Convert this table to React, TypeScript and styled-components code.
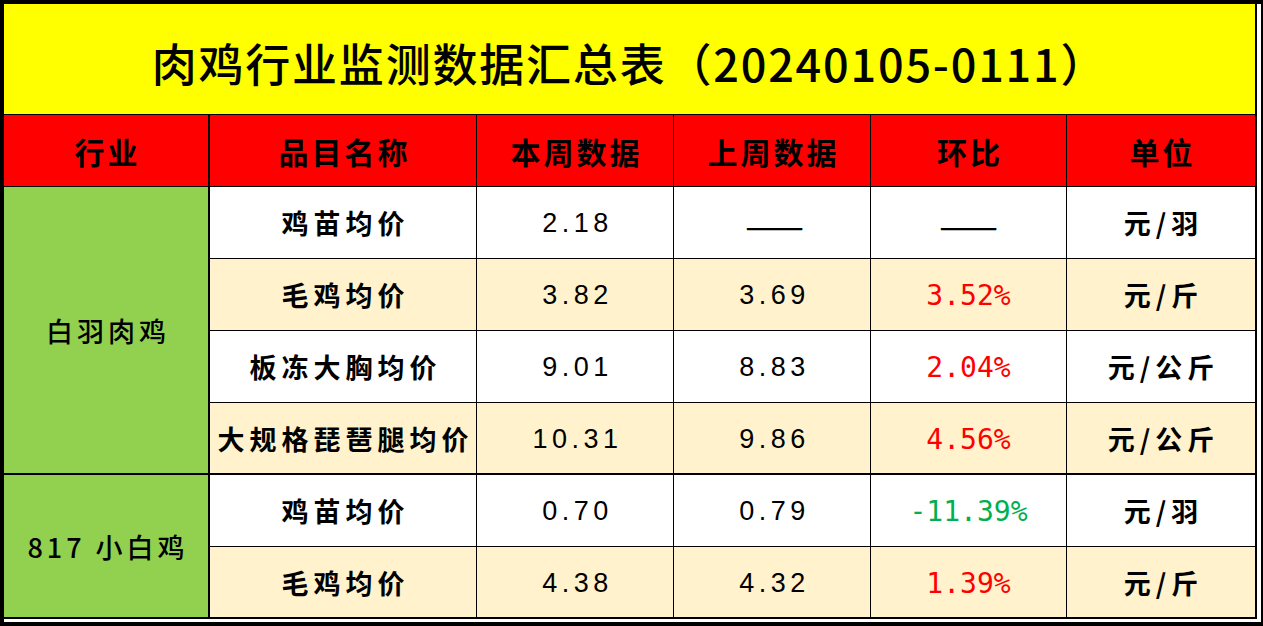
import React from "react";
import styled, { createGlobalStyle } from "styled-components";

const CJK = `"Noto Sans CJK SC", "Noto Sans", sans-serif`;

const COLOR = {
  TITLE: "#ffff00",
  HEAD: "#ff0000",
  GROUP: "#92d050",
  CREAM: "#fff2cc",
  WHITE: "#ffffff",
  UP: "#ff0000",
  DOWN: "#00b050",
};

const GlobalStyle = createGlobalStyle`
  body {
    margin: 0;
    background: #ffffff;
    font-family: ${CJK};
  }
`;

const Frame = styled.div`
  box-sizing: border-box;
  width: 1263px;
  height: 626px;
  border-top: 4px solid #000;
  border-left: 4px solid #000;
  border-bottom: 4px solid #000;
  border-right: 2px solid #000;
  background: #ffffff;
`;

const Sheet = styled.div`
  display: grid;
  grid-template-columns: 206px 267px 197px 197px 196px 190px;
  grid-template-rows: 111px repeat(7, 72px);
  width: 1253px;
`;

const Cell = styled.div<{ $bg?: string; $thickRight?: boolean; $thickBottom?: boolean }>`
  box-sizing: border-box;
  display: flex;
  align-items: center;
  justify-content: center;
  white-space: nowrap;
  background: ${p => p.$bg || COLOR.WHITE};
  border-right: ${p => (p.$thickRight ? 2 : 1)}px solid #000;
  border-bottom: ${p => (p.$thickBottom ? 2 : 1)}px solid #000;
  color: #000;
`;

const Title = styled(Cell)`
  grid-column: 1 / -1;
  padding-top: 6px;
  font-family: ${CJK};
  font-size: 45px;
  font-weight: 500;
  letter-spacing: 1.8px;
`;

const HeadCell = styled(Cell)`
  padding-left: 3px;
  font-family: ${CJK};
  font-size: 30px;
  font-weight: 700;
  letter-spacing: 3px;
`;

const GroupCell = styled(Cell)<{ $span: number }>`
  grid-row: span ${p => p.$span};
  padding-left: 4px;
  font-family: ${CJK};
  font-size: 27px;
  font-weight: 500;
  letter-spacing: 4px;
`;

const NameCell = styled(Cell)`
  padding-left: 5px;
  font-family: ${CJK};
  font-size: 27px;
  font-weight: 700;
  letter-spacing: 5px;
`;

const ValueCell = styled(Cell)`
  padding-left: 5px;
  padding-top: 2px;
  font-family: "Liberation Sans", Arial, sans-serif;
  font-size: 27px;
  letter-spacing: 4.5px;
`;

const Dash = styled.span`
  font-family: ${CJK};
  font-size: 35px;
  font-weight: 400;
  letter-spacing: 0;
`;

const RatioCell = styled(Cell)<{ $tone?: string }>`
  padding-top: 2px;
  font-family: "DejaVu Sans Mono", "Liberation Mono", monospace;
  font-size: 28px;
  color: ${p => p.$tone || "#000"};
`;

type Row = {
  item: string;
  cur: string;
  prev?: string;
  ratio?: string;
  unit: string;
};

const groups: { name: string; rows: Row[] }[] = [
  {
    name: "白羽肉鸡",
    rows: [
      { item: "鸡苗均价", cur: "2.18", unit: "元/羽" },
      { item: "毛鸡均价", cur: "3.82", prev: "3.69", ratio: "3.52%", unit: "元/斤" },
      { item: "板冻大胸均价", cur: "9.01", prev: "8.83", ratio: "2.04%", unit: "元/公斤" },
      { item: "大规格琵琶腿均价", cur: "10.31", prev: "9.86", ratio: "4.56%", unit: "元/公斤" },
    ],
  },
  {
    name: "817 小白鸡",
    rows: [
      { item: "鸡苗均价", cur: "0.70", prev: "0.79", ratio: "-11.39%", unit: "元/羽" },
      { item: "毛鸡均价", cur: "4.38", prev: "4.32", ratio: "1.39%", unit: "元/斤" },
    ],
  },
];

const heads = ["行业", "品目名称", "本周数据", "上周数据", "环比", "单位"];

export default function App() {
  let index = 0;
  return (
    <>
      <GlobalStyle />
      <Frame>
        <Sheet>
          <Title $bg={COLOR.TITLE} $thickRight>
            肉鸡行业监测数据汇总表（20240105-0111）
          </Title>
          {heads.map((h, i) => (
            <HeadCell key={h} $bg={COLOR.HEAD} $thickRight={i === 0 || i === heads.length - 1}>
              {h}
            </HeadCell>
          ))}
          {groups.map(group =>
            group.rows.map((row, r) => {
              const bg = index++ % 2 === 0 ? COLOR.WHITE : COLOR.CREAM;
              const last = r === group.rows.length - 1;
              const tone = row.ratio
                ? row.ratio.startsWith("-")
                  ? COLOR.DOWN
                  : COLOR.UP
                : undefined;
              return (
                <React.Fragment key={group.name + r}>
                  {r === 0 && (
                    <GroupCell $span={group.rows.length} $bg={COLOR.GROUP} $thickRight $thickBottom>
                      {group.name}
                    </GroupCell>
                  )}
                  <NameCell $bg={bg} $thickBottom={last}>{row.item}</NameCell>
                  <ValueCell $bg={bg} $thickBottom={last}>{row.cur}</ValueCell>
                  <ValueCell $bg={bg} $thickBottom={last}>
                    {row.prev || <Dash>——</Dash>}
                  </ValueCell>
                  <RatioCell $bg={bg} $thickBottom={last} $tone={tone}>
                    {row.ratio || <Dash>——</Dash>}
                  </RatioCell>
                  <NameCell $bg={bg} $thickBottom={last} $thickRight>{row.unit}</NameCell>
                </React.Fragment>
              );
            })
          )}
        </Sheet>
      </Frame>
    </>
  );
}
